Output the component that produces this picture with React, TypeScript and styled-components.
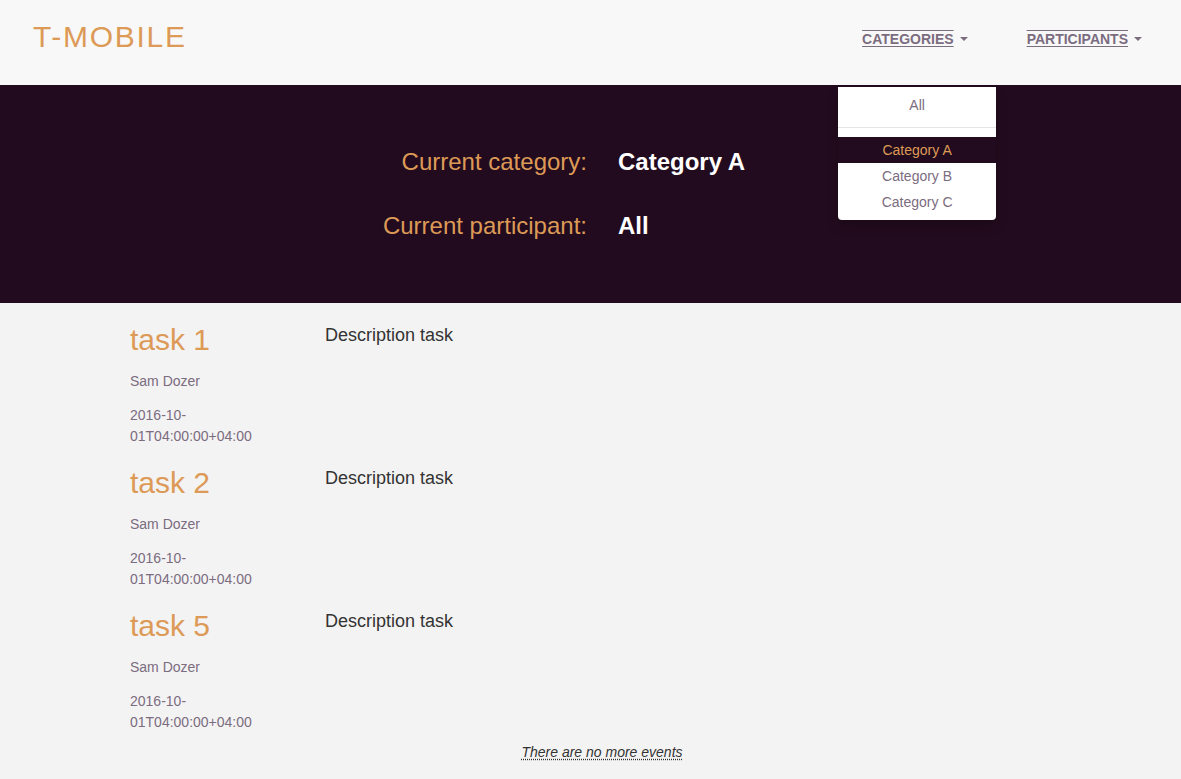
import React from "react";
import styled, { createGlobalStyle } from "styled-components";

const ORANGE = "#dd9a57";
const MUTED = "#7b6c80";
const DARK = "#220b1e";

const Global = createGlobalStyle`
  html, body { margin: 0; padding: 0; }
  body {
    font-family: "Liberation Sans", Arial, sans-serif;
    background: #f3f3f3;
    color: #333;
    font-size: 14px;
  }
`;

const Page = styled.div`
  min-height: 779px;
  background: #f3f3f3;
`;

const Header = styled.header`
  height: 85px;
  background: #f8f8f8;
  display: flex;
  justify-content: space-between;
  align-items: flex-start;
  padding: 0 39px 0 33px;
  box-sizing: border-box;
  position: relative;
  z-index: 5;
`;

const Logo = styled.div`
  margin-top: 22px;
  font-size: 30px;
  line-height: 30px;
  letter-spacing: 1.7px;
  color: ${ORANGE};
`;

const Nav = styled.nav`
  display: flex;
  gap: 59px;
  margin-top: 29px;
`;

const NavItem = styled.div`
  position: relative;
  display: flex;
  align-items: center;
`;

const NavLink = styled.span`
  font-size: 14px;
  line-height: 20px;
  font-weight: bold;
  color: ${MUTED};
  text-decoration: underline overline;
  text-decoration-thickness: 1px;
  text-underline-offset: 2px;
`;

const Caret = styled.span`
  display: inline-block;
  width: 0;
  height: 0;
  margin-left: 6px;
  border-top: 4px solid ${MUTED};
  border-left: 4px solid transparent;
  border-right: 4px solid transparent;
`;

const Menu = styled.ul`
  position: absolute;
  top: 58px;
  left: -24px;
  width: 158px;
  margin: 0;
  padding: 5px 0;
  list-style: none;
  background: #fff;
  border-radius: 0 0 4px 4px;
  box-shadow: 0 6px 12px rgba(0, 0, 0, 0.175);
  box-sizing: border-box;
`;

const MenuItem = styled.li<{ $active?: boolean }>`
  padding: 3px 20px;
  line-height: 20px;
  font-size: 14px;
  text-align: center;
  color: ${(p) => (p.$active ? ORANGE : MUTED)};
  background: ${(p) => (p.$active ? DARK : "transparent")};
`;

const Divider = styled.li`
  height: 1px;
  margin: 9px 0;
  background: #e5e5e5;
`;

const Banner = styled.section`
  background: ${DARK};
  height: 218px;
  box-sizing: border-box;
  padding: 61px 0 61px 24px;
  display: grid;
  grid-template-columns: 1fr 1fr;
  column-gap: 31px;
  row-gap: 32px;
  align-content: start;
`;

const BannerLabel = styled.div`
  text-align: right;
  font-size: 24px;
  line-height: 32px;
  color: ${ORANGE};
`;

const BannerValue = styled.div`
  font-size: 24px;
  line-height: 32px;
  font-weight: bold;
  color: #fff;
`;

const Content = styled.main`
  padding: 1px 107px 0 130px;
`;

const Task = styled.article`
  display: grid;
  grid-template-columns: 195px 1fr;
  padding-top: 19px;
`;

const TaskMeta = styled.div`
  display: flex;
  flex-direction: column;
`;

const TaskTitle = styled.h2`
  margin: 0 0 15px;
  font-size: 30px;
  line-height: 33px;
  font-weight: normal;
  color: ${ORANGE};
`;

const MetaText = styled.div<{ $gap?: number }>`
  width: 150px;
  font-size: 14px;
  line-height: 21px;
  color: ${MUTED};
  margin-bottom: ${(p) => p.$gap ?? 0}px;
`;

const Description = styled.div`
  padding-top: 1px;
  font-size: 18px;
  line-height: 23px;
  color: #333;
`;

const Footer = styled.div`
  margin-top: 9px;
  text-align: center;
  line-height: 20px;
`;

const NoMore = styled.span`
  font-style: italic;
  font-size: 14px;
  color: #333;
  text-decoration: underline dotted;
  text-underline-offset: 2px;
`;

const tasks = ["task 1", "task 2", "task 5"];

export default function App() {
  return (
    <Page>
      <Global />
      <Header>
        <Logo>T-MOBILE</Logo>
        <Nav>
          <NavItem>
            <NavLink>CATEGORIES</NavLink>
            <Caret />
            <Menu>
              <MenuItem>All</MenuItem>
              <Divider />
              <MenuItem $active>Category A</MenuItem>
              <MenuItem>Category B</MenuItem>
              <MenuItem>Category C</MenuItem>
            </Menu>
          </NavItem>
          <NavItem>
            <NavLink>PARTICIPANTS</NavLink>
            <Caret />
          </NavItem>
        </Nav>
      </Header>
      <Banner>
        <BannerLabel>Current category:</BannerLabel>
        <BannerValue>Category A</BannerValue>
        <BannerLabel>Current participant:</BannerLabel>
        <BannerValue>All</BannerValue>
      </Banner>
      <Content>
        {tasks.map((t) => (
          <Task key={t}>
            <TaskMeta>
              <TaskTitle>{t}</TaskTitle>
              <MetaText $gap={13}>Sam Dozer</MetaText>
              <MetaText>2016-10-01T04:00:00+04:00</MetaText>
            </TaskMeta>
            <Description>Description task</Description>
          </Task>
        ))}
        <Footer>
          <NoMore>There are no more events</NoMore>
        </Footer>
      </Content>
    </Page>
  );
}
